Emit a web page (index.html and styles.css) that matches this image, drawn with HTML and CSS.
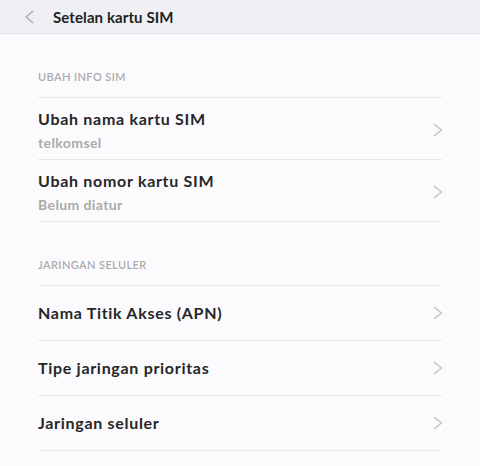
FILE: index.html
```html
<!DOCTYPE html>
<html>
<head>
  <meta charset="utf-8">
  <title>Setelan kartu SIM</title>
  <link rel="stylesheet" href="styles.css">
</head>
<body>
  <!--header-->
  <div class="topbar">
    <svg class="back" width="10" height="14" viewBox="0 0 10 14">
      <path d="M9 1 L2 7 L9 13" fill="none" stroke="#a9a9ad" stroke-width="1.3"/>
    </svg>
    <span class="title">Setelan kartu SIM</span>
  </div>

  <div class="list">
    <div class="section">UBAH INFO SIM</div>
    <div class="item double">
      <div class="text">
        <div class="name">Ubah nama kartu SIM</div>
        <div class="sub">telkomsel</div>
      </div>
      <svg class="arrow" width="10" height="14" viewBox="0 0 10 14"><path d="M1 1 L8.5 7 L1 13"/></svg>
    </div>
    <div class="item double">
      <div class="text">
        <div class="name">Ubah nomor kartu SIM</div>
        <div class="sub">Belum diatur</div>
      </div>
      <svg class="arrow" width="10" height="14" viewBox="0 0 10 14"><path d="M1 1 L8.5 7 L1 13"/></svg>
    </div>

    <div class="section">JARINGAN SELULER</div>
    <div class="item">
      <div class="name">Nama Titik Akses (APN)</div>
      <svg class="arrow" width="10" height="14" viewBox="0 0 10 14"><path d="M1 1 L8.5 7 L1 13"/></svg>
    </div>
    <div class="item">
      <div class="name">Tipe jaringan prioritas</div>
      <svg class="arrow" width="10" height="14" viewBox="0 0 10 14"><path d="M1 1 L8.5 7 L1 13"/></svg>
    </div>
    <div class="item">
      <div class="name">Jaringan seluler</div>
      <svg class="arrow" width="10" height="14" viewBox="0 0 10 14"><path d="M1 1 L8.5 7 L1 13"/></svg>
    </div>
  </div>
</body>
</html>
```

FILE: styles.css
```css
html, body {
  margin: 0;
  padding: 0;
  height: 100%;
  background-color: #fbfbfd;
  font-family: Lato, "DejaVu Sans", sans-serif;
  overflow: hidden;
}
.topbar {
  height: 33px;
  display: flex;
  align-items: center;
  padding-left: 24px;
  background-color: #eff0f4;
  border-bottom: 1px solid #e2e3e7;
}
.topbar .back {
  margin-right: 19px;
  margin-top: 1px;
}
.topbar .title {
  font-size: 15px;
  font-weight: bold;
  color: #222;
  letter-spacing: 0.1px;
}
.list {
  padding: 0 38px 0 38px;
}
.section {
  padding: 35px 0 12px;
  font-size: 11px;
  font-weight: 600;
  line-height: 16px;
  color: #ababad;
  letter-spacing: 0.4px;
  border-bottom: 1px solid #e8e8ea;
}
.item {
  display: flex;
  align-items: center;
  justify-content: space-between;
  height: 54px;
  border-bottom: 1px solid #e8e8ea;
}
.item.double {
  height: 61px;
  align-items: stretch;
}
.item.double .text {
  padding-top: 11px;
}
.item.double .arrow {
  align-self: center;
  margin-top: 2px;
}
.name {
  font-size: 16px;
  font-weight: bold;
  line-height: 20px;
  color: #262628;
  letter-spacing: 0.7px;
}
.sub {
  margin-top: 5px;
  font-size: 14px;
  font-weight: bold;
  line-height: 18px;
  color: #aaaaac;
  letter-spacing: 0.4px;
}
.arrow {
  margin-right: -1px;
}
.arrow path {
  fill: none;
  stroke: #bdbdc0;
  stroke-width: 1.2;
}
```
